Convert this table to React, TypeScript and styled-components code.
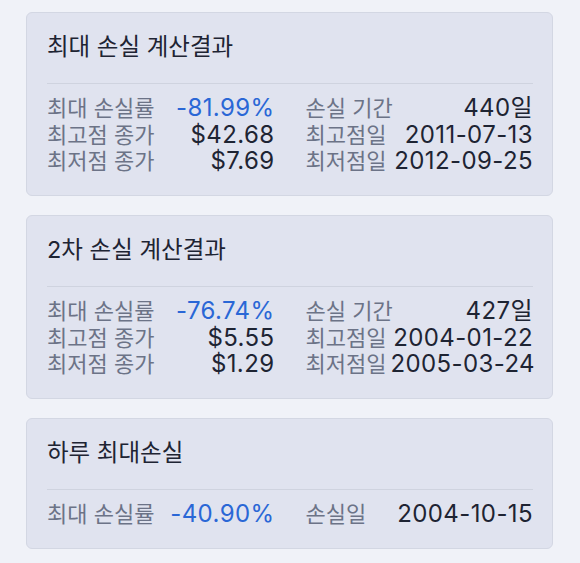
import React from 'react';
import styled, { createGlobalStyle } from 'styled-components';

const GlobalStyle = createGlobalStyle`
    html, body {
        margin: 0;
        padding: 0;
        background: #f0f2f8;
    }
    body {
        font-family: Inter, "Noto Sans CJK KR", sans-serif;
    }
`

const Page = styled.div`
    width: 580px;
    min-height: 563px;
    box-sizing: border-box;
    padding: 12px 27px 0 26px;
    display: flex;
    flex-direction: column;
    gap: 19px;
`

const Card = styled.div`
    background: #e0e3ef;
    border: 1px solid #d3d7e3;
    border-radius: 6px;
    padding: 17px 19px 20px 20px;
`

const Title = styled.div`
    font-size: 23.5px;
    line-height: 34px;
    color: #1e2433;
    padding-bottom: 19px;
    border-bottom: 1px solid #cfd3df;
    margin-bottom: 11px;
`

const Rows = styled.div`
    display: grid;
    grid-template-columns: minmax(0, 1fr) minmax(0, 1fr);
    grid-auto-rows: 26.7px;
    column-gap: 31px;
`

const Cell = styled.div`
    display: flex;
    justify-content: space-between;
    align-items: center;
    gap: 4px;
    height: 26.7px;
    line-height: 26.7px;
    white-space: nowrap;
`

const Label = styled.span`
    font-size: 22px;
    color: #6c7387;
`

const Value = styled.span<{ $accent?: boolean }>`
    font-size: 24px;
    letter-spacing: 0.4px;
    color: ${p => p.$accent ? '#2a67d6' : '#1e2433'};
`

type Item = { label: string; value: string; accent?: boolean }

const results: { title: string; items: Item[] }[] = [
    {
        title: '최대 손실 계산결과',
        items: [
            { label: '최대 손실률', value: '-81.99%', accent: true },
            { label: '손실 기간', value: '440일' },
            { label: '최고점 종가', value: '$42.68' },
            { label: '최고점일', value: '2011-07-13' },
            { label: '최저점 종가', value: '$7.69' },
            { label: '최저점일', value: '2012-09-25' },
        ],
    },
    {
        title: '2차 손실 계산결과',
        items: [
            { label: '최대 손실률', value: '-76.74%', accent: true },
            { label: '손실 기간', value: '427일' },
            { label: '최고점 종가', value: '$5.55' },
            { label: '최고점일', value: '2004-01-22' },
            { label: '최저점 종가', value: '$1.29' },
            { label: '최저점일', value: '2005-03-24' },
        ],
    },
    {
        title: '하루 최대손실',
        items: [
            { label: '최대 손실률', value: '-40.90%', accent: true },
            { label: '손실일', value: '2004-10-15' },
        ],
    },
]

export default function App() {
    return (
        <>
            <GlobalStyle />
            <Page>
                {results.map(card => (
                    <Card key={card.title}>
                        <Title>{card.title}</Title>
                        <Rows>
                            {card.items.map(item => (
                                <Cell key={item.label}>
                                    <Label>{item.label}</Label>
                                    <Value $accent={item.accent}>{item.value}</Value>
                                </Cell>
                            ))}
                        </Rows>
                    </Card>
                ))}
            </Page>
        </>
    )
}
